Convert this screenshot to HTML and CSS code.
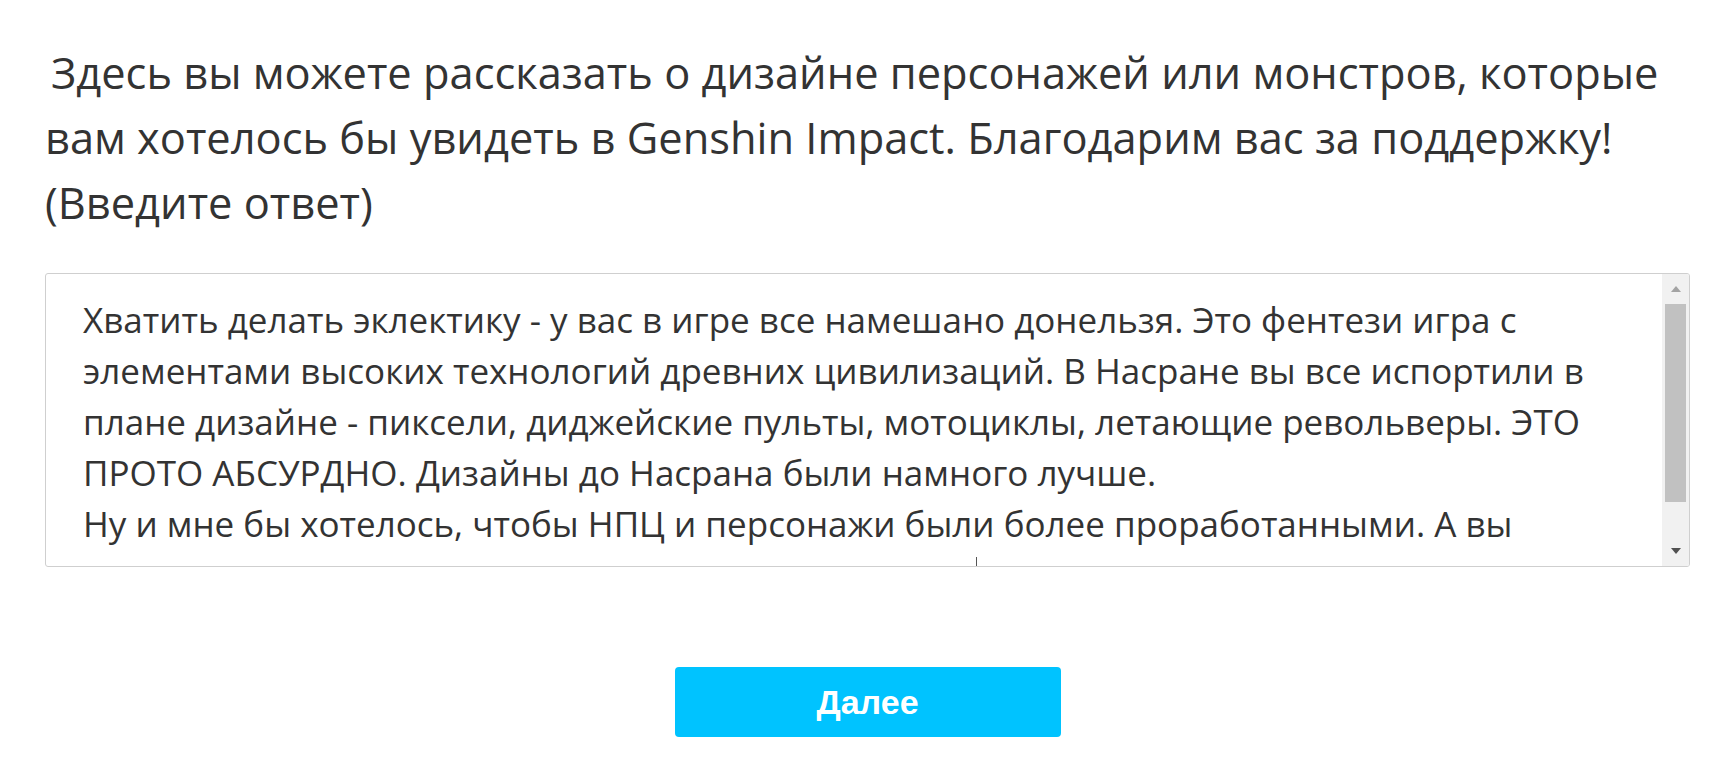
FILE: index.html
```html
<!DOCTYPE html>
<html lang="ru">
<head>
    <meta charset="UTF-8">
    <meta name="viewport" content="width=device-width, initial-scale=1.0">
    <title>Опрос</title>
    <link rel="stylesheet" href="styles.css">
</head>
<body>
    <div class="question">
        <p class="question-title">Здесь вы можете рассказать о дизайне персонажей или монстров, которые вам хотелось бы увидеть в Genshin Impact. Благодарим вас за поддержку! (Введите ответ)</p>
        <div class="answer-box">
            <div class="answer-text">Хватить делать эклектику - у вас в игре все намешано донельзя. Это фентези игра с
элементами высоких технологий древних цивилизаций. В Насране вы все испортили в
плане дизайне - пиксели, диджейские пульты, мотоциклы, летающие револьверы. ЭТО
ПРОТО АБСУРДНО. Дизайны до Насрана были намного лучше.
Ну и мне бы хотелось, чтобы НПЦ и персонажи были более проработанными. А вы</div>
            <div class="scrollbar">
                <span class="arrow arrow-up"></span>
                <div class="track"><div class="thumb"></div></div>
                <span class="arrow arrow-down"></span>
            </div>
            <span class="mouse-cursor"></span>
        </div>
    </div>
    <div class="actions">
        <button class="next-button">Далее</button>
    </div>
</body>
</html>
```

FILE: styles.css
```css
* {
    margin: 0;
    padding: 0;
    box-sizing: border-box;
}
body {
    font-family: 'Open Sans', 'Noto Sans', sans-serif;
    background: #fff;
    color: #333;
    padding: 40px 43px 0 45px;
}
.question-title {
    font-size: 43.4px;
    line-height: 65px;
    text-indent: 6px;
    color: #333;
}
.answer-box {
    position: relative;
    display: flex;
    margin-top: 38px;
    height: 294px;
    border: 1px solid #cfcfcf;
    border-radius: 3px;
    overflow: hidden;
}
/* текст ответа, переносы строк как в поле ввода */
.answer-text {
    flex: 1;
    padding: 20px 10px 0 37px;
    font-size: 35px;
    line-height: 51px;
    color: #333;
    white-space: pre-line;
    overflow: hidden;
}
.scrollbar {
    width: 27px;
    background: #f1f1f1;
    display: flex;
    flex-direction: column;
    align-items: center;
}
.arrow {
    height: 30px;
    display: flex;
    align-items: center;
}
.arrow::before {
    content: "";
    border-left: 5px solid transparent;
    border-right: 5px solid transparent;
}
.arrow-up::before {
    border-bottom: 6px solid #a3a3a3;
}
.arrow-down::before {
    border-top: 6px solid #505050;
}
.track {
    flex: 1;
    width: 100%;
    padding: 0 3px;
}
.thumb {
    height: 198px;
    background: #c1c1c1;
}
.mouse-cursor {
    position: absolute;
    left: 930px;
    bottom: 0;
    width: 1px;
    height: 9px;
    background: #555;
}
.actions {
    display: flex;
    justify-content: center;
    margin-top: 100px;
}
.next-button {
    width: 386px;
    height: 70px;
    background-color: #00c3ff;
    color: #fff;
    border: none;
    border-radius: 4px;
    font-family: 'Liberation Sans', Arial, sans-serif;
    font-size: 34px;
    font-weight: bold;
    cursor: pointer;
}
```
